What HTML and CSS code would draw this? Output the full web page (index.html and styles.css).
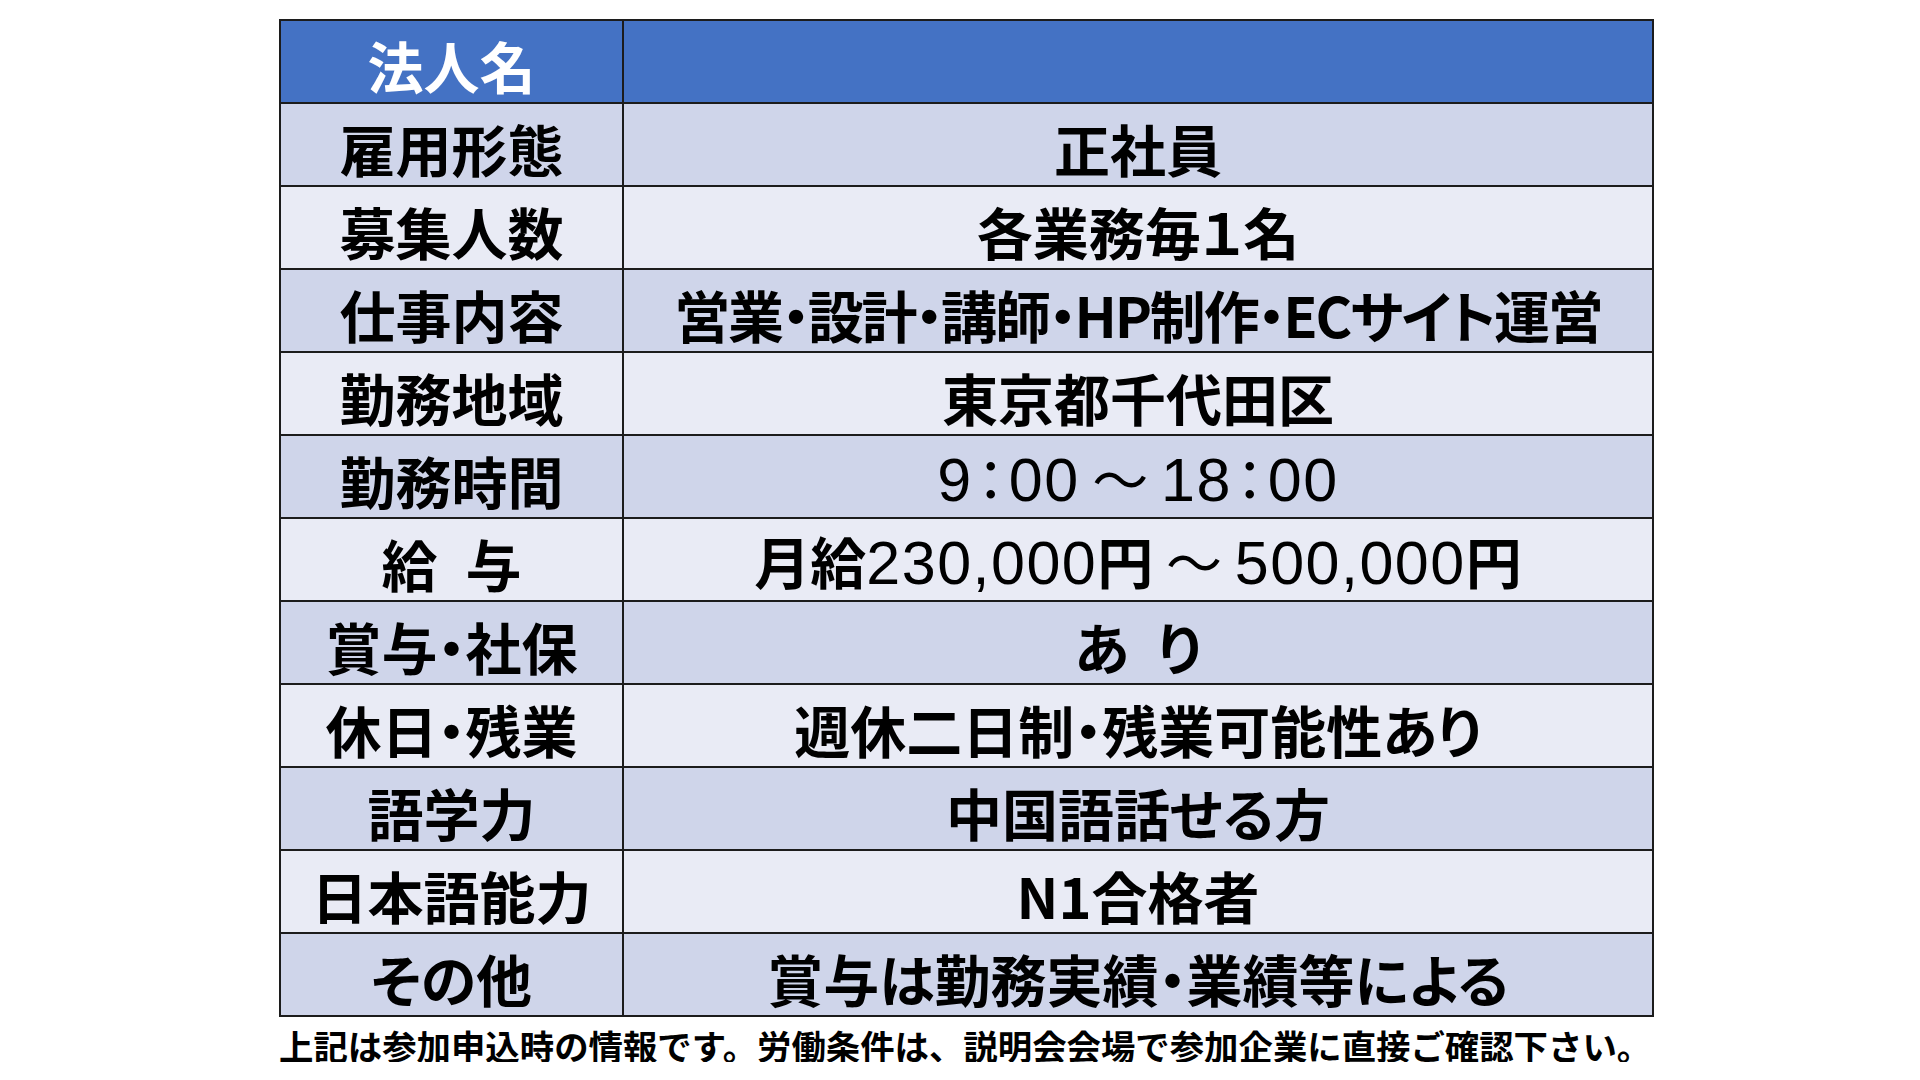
FILE: index.html
```html
<!DOCTYPE html>
<html lang="ja">
<head>
<meta charset="utf-8">
<title>募集要項</title>
<link rel="stylesheet" href="styles.css">
</head>
<body>
<div class="page">
  <table class="sheet">
    <colgroup><col class="col-label"><col class="col-value"></colgroup>
    <tr class="head"><td class="label">法人名</td><td class="value"></td></tr>
    <tr class="dark"><td class="label">雇用形態</td><td class="value">正社員</td></tr>
    <tr class="light"><td class="label">募集人数</td><td class="value">各業務毎１名</td></tr>
    <tr class="dark"><td class="label">仕事内容</td><td class="value tight">営業・設計・講師・HP制作・ECサイト運営</td></tr>
    <tr class="light"><td class="label">勤務地域</td><td class="value">東京都千代田区</td></tr>
    <tr class="dark"><td class="label">勤務時間</td><td class="value"><span class="num">9</span><span class="colon">：</span><span class="num">00</span> <span class="thin">～</span> <span class="num">18</span><span class="colon">：</span><span class="num">00</span></td></tr>
    <tr class="light"><td class="label">給&ensp;与</td><td class="value">月給<span class="num">230,000</span>円 <span class="thin">～</span> <span class="num">500,000</span>円</td></tr>
    <tr class="dark"><td class="label">賞与・社保</td><td class="value">あ&ensp;り</td></tr>
    <tr class="light"><td class="label">休日・残業</td><td class="value">週休二日制・残業可能性あり</td></tr>
    <tr class="dark"><td class="label">語学力</td><td class="value">中国語話せる方</td></tr>
    <tr class="light"><td class="label">日本語能力</td><td class="value">N1合格者</td></tr>
    <tr class="dark"><td class="label">その他</td><td class="value">賞与は勤務実績・業績等による</td></tr>
  </table>
  <p class="note">上記は参加申込時の情報です。労働条件は、説明会会場で参加企業に直接ご確認下さい。</p>
</div>
</body>
</html>
```

FILE: styles.css
```css
html, body {
  margin: 0;
  padding: 0;
  background: #ffffff;
}

body {
  font-family: "Noto Sans CJK JP", "Noto Sans", sans-serif;
  color: #000000;
}

.page {
  padding: 19px 0 0 279px;
}

.sheet {
  border-collapse: collapse;
  table-layout: fixed;
  width: 1373px;
}

.col-label {
  width: 343px;
}

.col-value {
  width: 1030px;
}

.sheet tr {
  height: 83px;
}

.sheet td {
  border: 2px solid #1c1c1c;
  padding: 7px 0 0 0;
  text-align: center;
  vertical-align: middle;
  font-size: 56px;
  font-weight: 700;
  line-height: 1;
  white-space: nowrap;
  font-feature-settings: "palt";
  letter-spacing: 0;
}

.head td {
  background: #4472c4;
  color: #ffffff;
}

.dark td {
  background: #cfd5ea;
}

.light td {
  background: #e9ebf5;
}

.sheet td.tight {
  letter-spacing: -2.2px;
}

.num {
  font-family: "Liberation Sans", Arial, sans-serif;
  font-weight: 400;
  font-size: 61px;
  letter-spacing: 1.5px;
}

.thin {
  font-weight: 400;
  font-feature-settings: normal;
}

.colon {
  font-weight: 400;
  margin: 0 4px;
}

.note {
  margin: 11px 0 0 0;
  font-size: 34.4px;
  font-weight: 700;
  line-height: 1;
  white-space: nowrap;
}
```
